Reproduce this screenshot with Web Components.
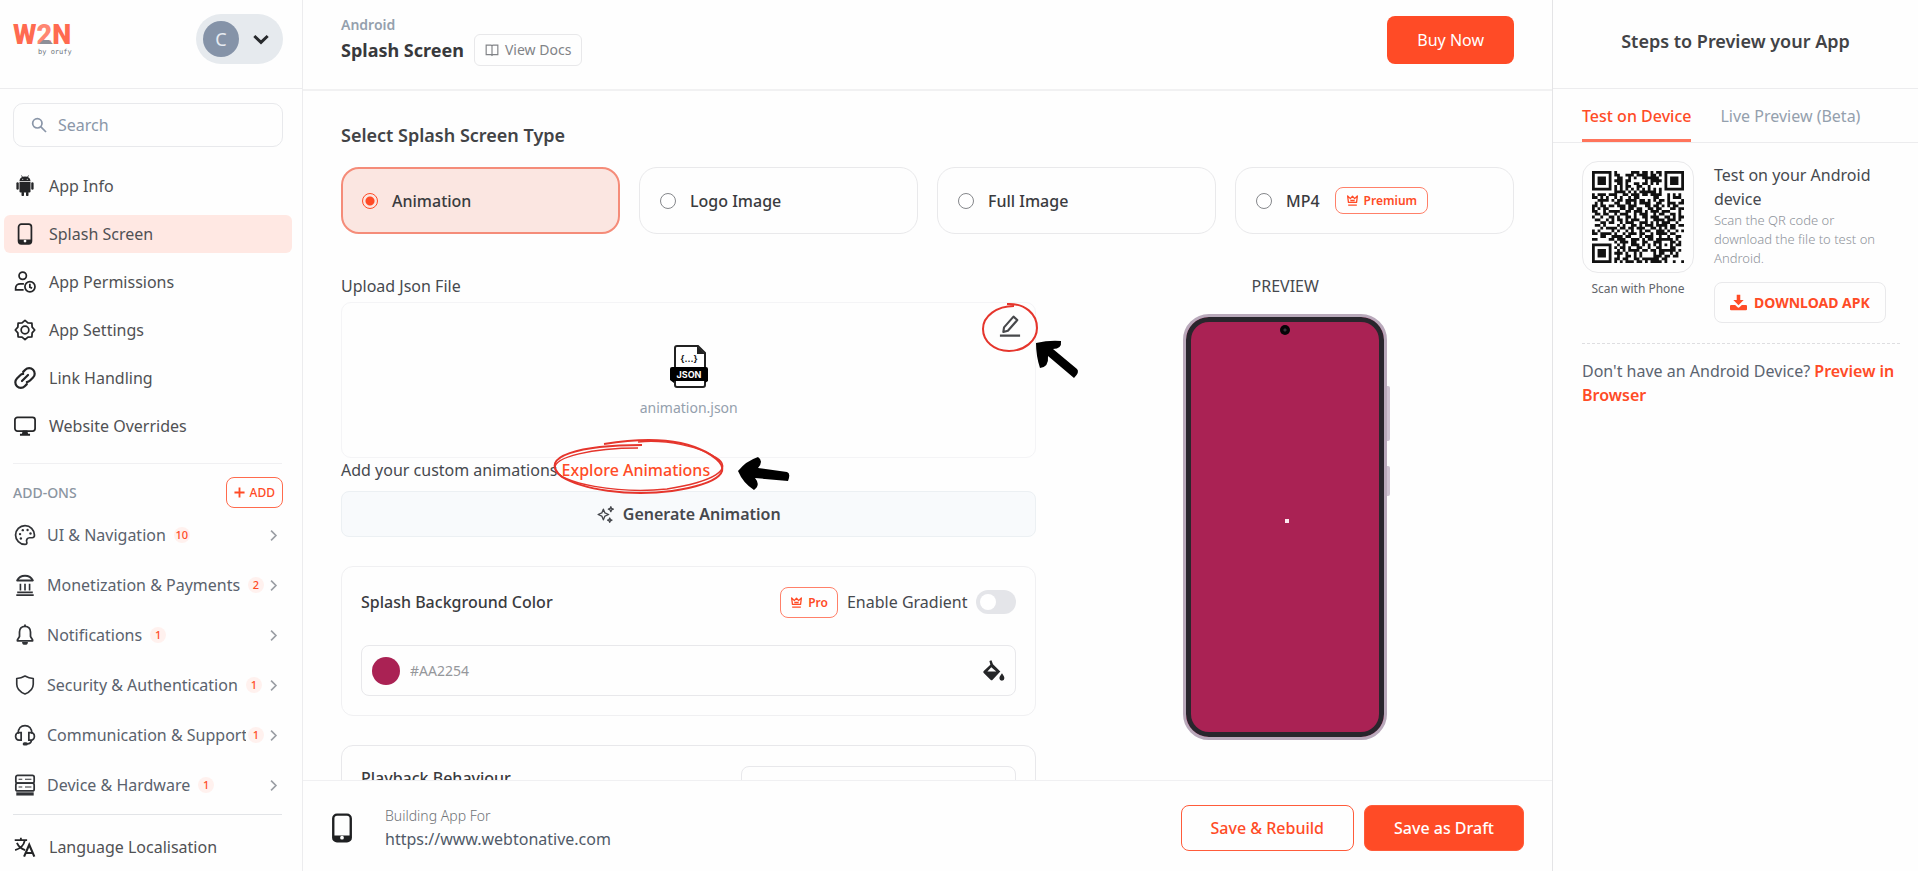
<!DOCTYPE html>
<html lang="en">
<head>
<meta charset="UTF-8">
<meta name="viewport" content="width=device-width, initial-scale=1.0">
<title>Splash Screen</title>
<style>
    body {
        margin: 0;
        font-family: "Noto Sans", "Open Sans", sans-serif;
        font-size: 16px;
        line-height: 24px;
        color: #46494e;
        background: #fefefe;
        --accent: #ff4b26;
        --line: #ececee;
        --muted: #94a0ad;
    }
</style>
</head>
<body>
<app-layout>
    <app-sidebar slot="left">
        <nav-item icon="android">App Info</nav-item>
        <nav-item icon="phone" active>Splash Screen</nav-item>
        <nav-item icon="permissions">App Permissions</nav-item>
        <nav-item icon="settings">App Settings</nav-item>
        <nav-item icon="link">Link Handling</nav-item>
        <nav-item icon="monitor">Website Overrides</nav-item>

        <addon-item slot="addons" icon="palette" count="10">UI &amp; Navigation</addon-item>
        <addon-item slot="addons" icon="bank" count="2">Monetization &amp; Payments</addon-item>
        <addon-item slot="addons" icon="bell" count="1">Notifications</addon-item>
        <addon-item slot="addons" icon="shield" count="1">Security &amp; Authentication</addon-item>
        <addon-item slot="addons" icon="headset" count="1">Communication &amp; Support</addon-item>
        <addon-item slot="addons" icon="server" count="1">Device &amp; Hardware</addon-item>

        <nav-item slot="bottom" icon="language">Language Localisation</nav-item>
    </app-sidebar>

    <page-header slot="header" section="Android" heading="Splash Screen"></page-header>

    <splash-editor slot="content">
        <type-card slot="types" value="animation" checked>Animation</type-card>
        <type-card slot="types" value="logo">Logo Image</type-card>
        <type-card slot="types" value="full">Full Image</type-card>
        <type-card slot="types" value="mp4">MP4<plan-badge slot="badge">Premium</plan-badge></type-card>

        <json-upload slot="form"></json-upload>
        <color-card slot="form"></color-card>
        <playback-card slot="form"></playback-card>

        <phone-preview slot="preview"></phone-preview>
    </splash-editor>

    <save-bar slot="footer" url="https://www.webtonative.com"></save-bar>

    <preview-steps slot="right"></preview-steps>
</app-layout>

<script>
const icons = {
    android: '<g fill="currentColor"><path d="M6 7.500h12v10.200a1.300 1.300 0 0 1-1.300 1.300H7.300A1.300 1.300 0 0 1 6 17.700z"/><path d="M6 6.700C6.100 4.600 7.200 3.100 8.800 2.300L7.700.8l.6-.4 1.200 1.600a7 7 0 0 1 5 0L15.700.4l.6.4-1.100 1.500c1.600.8 2.700 2.300 2.800 4.400z"/><rect x="2.600" y="8" width="2.600" height="8" rx="1.300"/><rect x="18.800" y="8" width="2.600" height="8" rx="1.300"/><rect x="8.200" y="18" width="2.700" height="5" rx="1.300"/><rect x="13.100" y="18" width="2.700" height="5" rx="1.300"/></g><g fill="#fff"><circle cx="9.500" cy="4.600" r=".6"/><circle cx="14.500" cy="4.600" r=".6"/></g>',
    phone: '<rect x="5" y="1.300" width="14" height="21.400" rx="3" fill="none" stroke="currentColor" stroke-width="1.900"/><path d="M5 18h14v2a2.700 2.700 0 0 1-2.700 2.700H7.700A2.700 2.700 0 0 1 5 20z" fill="currentColor"/><circle cx="12" cy="19.700" r="1.500" fill="#fff"/>',
    permissions: '<g fill="none" stroke="currentColor" stroke-width="1.900"><circle cx="9.500" cy="5.200" r="4"/><path d="M10.500 20.500H1.800v-1.900c0-3 2.400-4.600 5-4.600h4"/><circle cx="17.400" cy="17.200" r="5.500"/><path d="M17.300 14v3.600l2.400 1.300"/></g>',
    settings: '<g fill="none" stroke="currentColor" stroke-width="1.900" stroke-linejoin="round"><circle cx="12" cy="12" r="4.200"/><path d="M12 1.400l3.200 2.800 4.300.3.300 4.300 2.800 3.200-2.800 3.200-.3 4.300-4.300.3-3.200 2.800-3.200-2.800-4.300-.3-.3-4.300L1.400 12l2.800-3.200.3-4.300 4.300-.3z"/></g>',
    link: '<g fill="none" stroke="currentColor" stroke-width="2.400" stroke-linecap="round"><path d="M10 5.300l2.300-2.300a6 6 0 0 1 8.500 8.500l-3.300 3.300a5.500 5.500 0 0 1-3.500 1.600"/><path d="M14 18.700l-2.300 2.300a6 6 0 0 1-8.500-8.500l3.300-3.300A5.500 5.500 0 0 1 10 7.600"/><path d="M8.700 15.300l6.600-6.600"/></g>',
    monitor: '<rect x="1" y="2.500" width="22" height="15" rx="2.800" fill="none" stroke="currentColor" stroke-width="1.900"/><path d="M9.500 17h5l.8 3.500h2.200v2h-11v-2h2.200z" fill="currentColor"/>',
    palette: '<path d="M12 1.700a10.300 10.300 0 0 0 0 20.600c1.700 0 2.400-1.300 1.900-2.700-.8-2.600.6-4.700 3.300-4.600h2.600c1.700 0 2.600-1.200 2.500-3C22.100 6.200 17.700 1.700 12 1.700z" fill="none" stroke="currentColor" stroke-width="1.900"/><g fill="currentColor"><circle cx="6.600" cy="11" r="1.300"/><circle cx="9.600" cy="6.700" r="1.300"/><circle cx="14.800" cy="6.500" r="1.300"/><circle cx="18" cy="10.300" r="1.300"/><circle cx="7.500" cy="15.800" r="1.300"/></g>',
    bank: '<path d="M3.500 7C5 4 8.200 2 12 2s7 2 8.500 5z" fill="none" stroke="currentColor" stroke-width="2.200" stroke-linejoin="round"/><g stroke="currentColor" stroke-width="1.800"><path d="M7 10.500v7.500M12 10.500v7.500M17 10.500v7.500M3.500 20h17M2.500 23h19"/></g>',
    bell: '<path d="M12 2.500c-3.700 0-6 2.700-6 6.200v5L3.700 17.500v.9h16.600v-.9L18 13.700v-5c0-3.500-2.300-6.200-6-6.200z" fill="none" stroke="currentColor" stroke-width="1.900" stroke-linejoin="round"/><path d="M12 .6v2" stroke="currentColor" stroke-width="2"/><path d="M8.800 19.500h6.400a3.200 3.200 0 0 1-6.400 0z" fill="currentColor"/>',
    shield: '<path d="M12 2.200c2.800 1.600 5.600 2.500 9 2.700v6.200c0 5-3.300 8.300-9 10.700-5.700-2.400-9-5.700-9-10.700V4.900c3.400-.2 6.200-1.100 9-2.700z" fill="none" stroke="currentColor" stroke-width="1.800" stroke-linejoin="round"/>',
    headset: '<g fill="none" stroke="currentColor" stroke-width="1.900"><path d="M4.500 10.500C4.500 5 7.700 1.700 12 1.700S19.500 5 19.500 10.500"/><path d="M7.800 9.500v8H5.300A3.500 3.500 0 0 1 1.800 14v-1a3.500 3.500 0 0 1 3.500-3.500zM16.200 9.500v8h2.500a3.500 3.500 0 0 0 3.500-3.500v-1a3.500 3.500 0 0 0-3.500-3.500z"/><path d="M19 17.500c0 2.700-2 4.200-5 4.200"/></g><rect x="9.500" y="20" width="5.500" height="3.500" rx="1.700" fill="currentColor"/>',
    server: '<g fill="none" stroke="currentColor" stroke-width="1.900"><rect x="2" y="1.500" width="20" height="8.500" rx="2"/><rect x="2" y="10" width="20" height="8.500" rx="2"/></g><path d="M5 5.700h4M12 5.700h7M5 14.200h4M12 14.200h7" stroke="currentColor" stroke-width="1.200"/><path d="M2.500 20h19v3.500h-19z" fill="currentColor"/>',
    language: '<g fill="none" stroke="currentColor" stroke-width="2"><path d="M.8 4.500h13.500M7.500 2v2.500M3.200 7.500c1.500 3.600 4.700 6.500 9 7.800M11.700 5c-1 4.800-4.700 8.700-10.500 10.300"/><path d="M11 22.500l5.600-13 5.600 13M13 18.500h7.200" stroke-width="2.300"/></g>',
    search: '<g fill="none" stroke="currentColor" stroke-width="2.600"><circle cx="9.500" cy="9.500" r="7"/><path d="M14.500 14.500l8 8"/></g>',
    down: '<path d="M2 7.500l10 9.500 10-9.500" fill="none" stroke="currentColor" stroke-width="4.500"/>',
    right: '<path d="M7.500 3l9 9-9 9" fill="none" stroke="currentColor" stroke-width="3"/>',
    plus: '<path d="M12 1v22M1 12h22" fill="none" stroke="currentColor" stroke-width="4"/>',
    book: '<path d="M2 3.500h8.500L12 5l1.500-1.500H22v16.500h-8.500L12 21.500 10.500 20H2zM12 5v16" fill="none" stroke="currentColor" stroke-width="2"/>',
    crown: '<path d="M3 3.500l5 5L12 4l4 4.500 5-5-1.500 12h-15zM4 20.500h16M8 12h8" fill="none" stroke="currentColor" stroke-width="2.400" stroke-linejoin="round"/>',
    pencil: '<path d="M5.500 13.500L15.800 1.800l4.200 3.700L9.700 17.200l-5 1.300zM1 22.500h22" fill="none" stroke="currentColor" stroke-width="2.300" stroke-linejoin="round"/>',
    sparkles: '<g fill="none" stroke="currentColor" stroke-width="1.900" stroke-linejoin="round"><path d="M9 4.500l2.200 5.300L16.500 12l-5.300 2.200L9 19.500l-2.200-5.300L1.500 12l5.300-2.200z"/><path d="M19.500 1l1 2.500L23 4.500l-2.500 1-1 2.500-1-2.500-2.500-1 2.500-1zM18 17l.9 2.100 2.100.9-2.100.9L18 23l-.9-2.100L15 20l2.100-.9z"/></g>',
    bucket: '<path d="M7 1l2.200-.6 1.700 4.200 8 8-8.400 8.900a1.600 1.600 0 0 1-2.300 0L.8 14.300a1.600 1.600 0 0 1 0-2.300L8 5.200zM9 8l-4.200 4.500h9.700z" fill="currentColor" fill-rule="evenodd"/><path d="M20.700 14.500c1.600 2.300 2.600 3.900 2.600 5.300a2.700 2.700 0 0 1-5.400 0c0-1.400 1.200-3 2.800-5.300z" fill="currentColor"/>',
    download: '<path d="M9.500 1h5v7.500h4.800L12 16 4.700 8.500h4.800z" fill="currentColor"/><path d="M1.500 15.500h5.800l3 3a2.400 2.400 0 0 0 3.400 0l3-3h5.800A1.500 1.500 0 0 1 24 17v4.500a1.500 1.500 0 0 1-1.500 1.500h-21A1.500 1.500 0 0 1 0 21.500V17a1.500 1.500 0 0 1 1.500-1.500z" fill="currentColor"/>'
};

const resetStyles = `
    :host, *, *::before, *::after { box-sizing: border-box; }
    button, input, select { font: inherit; color: inherit; margin: 0; }
    button { cursor: pointer; }
    a { color: inherit; text-decoration: none; }
    h1, h2, h3, p { margin: 0; }
`;

// Registers an element whose shadow root is cloned from its template.
// setup runs once, when the element's attributes can be read.
function define(name, html, setup) {
    const template = document.createElement('template');
    template.innerHTML = `<style>${resetStyles}</style>` + html;

    customElements.define(name, class extends HTMLElement {
        constructor() {
            super();
            this.attachShadow({mode: 'open'});
            this.shadowRoot.appendChild(template.content.cloneNode(true));
        }

        connectedCallback() {
            if (setup && !this.ready) {
                this.ready = true;
                setup(this, this.shadowRoot);
            }
        }
    });
}

define('plan-badge', `
    <style>
        :host {
            display: inline-flex;
            align-items: center;
            gap: 5px;
            padding: 3px 10px;
            border: 1px solid #ff8069;
            border-radius: 8px;
            font-size: 12px;
            line-height: 19px;
            font-weight: 600;
            color: var(--accent);
        }
        app-icon { width: 13px; height: 13px; }
    </style>
    <app-icon name="crown"></app-icon><slot></slot>
`);

define('app-layout', `
    <style>
        :host {
            display: grid;
            grid-template-columns: 303px minmax(0, 1fr) 366px;
            height: 100vh;
            overflow: hidden;
        }
        .left { border-right: 1px solid var(--line); overflow: hidden; }
        .right { border-left: 1px solid #e4e4e6; overflow: hidden; }
        main { display: flex; flex-direction: column; min-height: 0; }
        .content { flex: 1; min-height: 0; overflow: hidden; }
    </style>
    <div class="left"><slot name="left"></slot></div>
    <main>
        <slot name="header"></slot>
        <div class="content"><slot name="content"></slot></div>
        <slot name="footer"></slot>
    </main>
    <div class="right"><slot name="right"></slot></div>
`);

define('brand-logo', `
    <style>
        :host { display: block; }
        svg { display: block; overflow: visible; }
        .mark { font: 900 27px Roboto, sans-serif; }
        .by { font: 7px "DejaVu Sans Mono", monospace; }
    </style>
    <svg width="58" height="34" viewBox="0 0 58 34">
        <text class="mark" x="0" y="20" fill="#ff6a50">W<tspan fill="#ff8672">2</tspan>N</text>
        <path d="M26 20l4-4h6l4 4z" fill="#8d8f98"/>
        <text class="by" x="25" y="30" fill="#6d747c">by orufy</text>
    </svg>
`);

define('app-sidebar', `
    <style>
        :host { display: block; }
        header {
            display: flex;
            justify-content: space-between;
            align-items: flex-start;
            height: 89px;
            padding: 14px 19px 0 13px;
            border-bottom: 1px solid var(--line);
        }
        brand-logo { margin-top: 10px; }
        .account {
            display: flex;
            align-items: center;
            gap: 14px;
            height: 50px;
            padding: 0 14px 0 7px;
            border: 0;
            border-radius: 25px;
            background: #e6eaee;
            color: #27292c;
        }
        .account span {
            width: 36px;
            height: 36px;
            border-radius: 50%;
            background: #8593a8;
            color: #e6ebf2;
            font-size: 18px;
            line-height: 36px;
        }
        .account app-icon { width: 16px; height: 16px; }
        .search {
            display: flex;
            align-items: center;
            gap: 11px;
            height: 44px;
            margin: 14px 19px 0 13px;
            padding: 0 17px;
            border: 1px solid #e8e9ec;
            border-radius: 10px;
            color: #8a96a8;
        }
        .search app-icon { width: 16px; height: 16px; }
        input { flex: 1; min-width: 0; padding: 0; border: 0; outline: 0; background: none; }
        input::placeholder { color: inherit; opacity: 1; }
        nav { display: grid; gap: 10px; margin: 20px 10px 0 4px; }
        hr { margin: 4px 20px 0 13px; border: 0; border-top: 1px solid #e2e4e7; }
        .top { margin-top: 18px; border-color: #f0f0f2; }
        .addons-head {
            display: flex;
            justify-content: space-between;
            align-items: center;
            margin: 13px 19px 2px 13px;
            color: #8b95a1;
            font-size: 14px;
            font-weight: 500;
        }
        h2 { font: inherit; }
        .add {
            display: flex;
            align-items: center;
            gap: 5px;
            height: 31px;
            padding: 0 7px;
            border: 1px solid #ff6b4d;
            border-radius: 8px;
            background: none;
            color: var(--accent);
            font-size: 12px;
            font-weight: 500;
        }
        .add app-icon { width: 11px; height: 11px; }
        .bottom { margin-top: 13px; }
    </style>
    <header>
        <brand-logo></brand-logo>
        <button class="account" type="button" aria-label="Account C"><span>C</span><app-icon name="down"></app-icon></button>
    </header>
    <label class="search"><app-icon name="search"></app-icon><input type="text" placeholder="Search" aria-label="Search"></label>
    <nav><slot></slot></nav>
    <hr class="top">
    <div class="addons-head">
        <h2>ADD-ONS</h2>
        <button class="add" type="button"><app-icon name="plus"></app-icon>ADD</button>
    </div>
    <slot name="addons"></slot>
    <hr>
    <nav class="bottom"><slot name="bottom"></slot></nav>
`);

define('nav-item', `
    <style>
        :host { display: block; color: #505154; }
        a {
            display: flex;
            align-items: center;
            gap: 13px;
            height: 38px;
            padding-left: 10px;
            border-radius: 6px;
        }
        :host([active]) a { background: #ffe8e3; }
        app-icon { color: #242527; }
    </style>
    <a href="#"><app-icon></app-icon><span><slot></slot></span></a>
`, (host, root) => {
    root.querySelector('app-icon').setAttribute('name', host.getAttribute('icon'));
});

define('addon-item', `
    <style>
        :host { display: block; color: #5a626d; }
        a {
            display: flex;
            align-items: center;
            height: 50px;
            padding: 0 22px 0 14px;
        }
        /* the label may run into its own padding before it is clipped */
        .label { min-width: 0; margin-left: 11px; padding-right: 6px; overflow: hidden; white-space: nowrap; }
        .count {
            flex: none;
            min-width: 16px;
            margin: 0 3px 0 2px;
            border-radius: 8px;
            background: #fff1ee;
            color: var(--accent);
            font-size: 11px;
            line-height: 16px;
            font-weight: 500;
            text-align: center;
        }
        .icon { color: #303236; }
        .chevron { width: 13px; height: 13px; margin-left: auto; color: #9a9ea4; }
    </style>
    <a href="#">
        <app-icon class="icon"></app-icon>
        <span class="label"><slot></slot></span>
        <span class="count"></span>
        <app-icon class="chevron" name="right"></app-icon>
    </a>
`, (host, root) => {
    root.querySelector('.icon').setAttribute('name', host.getAttribute('icon'));
    root.querySelector('.count').textContent = host.getAttribute('count');
});

define('page-header', `
    <style>
        :host {
            display: flex;
            justify-content: space-between;
            align-items: flex-start;
            height: 91px;
            padding: 16px 38px 0;
            border-bottom: 2px solid #f1f1f2;
        }
        .section { font-size: 14px; line-height: 18px; font-weight: 600; color: var(--muted); }
        .title { display: flex; align-items: center; gap: 10px; }
        h1 { font-size: 18px; line-height: 32px; font-weight: 700; color: #38393c; }
        .docs {
            display: flex;
            align-items: center;
            gap: 6px;
            height: 32px;
            padding: 0 10px;
            border: 1px solid #e8e8ea;
            border-radius: 6px;
            color: #818387;
            font-size: 14px;
        }
        .docs app-icon { width: 14px; height: 14px; }
        button {
            height: 48px;
            padding: 0 30px;
            border: 0;
            border-radius: 8px;
            background: var(--accent);
            color: #fff;
        }
    </style>
    <div>
        <div class="section"></div>
        <div class="title">
            <h1></h1>
            <a class="docs" href="#"><app-icon name="book"></app-icon>View Docs</a>
        </div>
    </div>
    <button type="button">Buy Now</button>
`, (host, root) => {
    root.querySelector('.section').textContent = host.getAttribute('section');
    root.querySelector('h1').textContent = host.getAttribute('heading');
});

define('splash-editor', `
    <style>
        :host { display: block; padding: 31px 38px 0; }
        h2 { font-size: 18px; line-height: 26px; font-weight: 600; color: #424346; }
        .types {
            display: grid;
            grid-template-columns: repeat(4, minmax(0, 1fr));
            gap: 19px;
            margin-top: 19px;
        }
        .columns {
            display: grid;
            grid-template-columns: minmax(0, 152fr) minmax(0, 100fr);
            gap: 20px;
            margin-top: 40px;
        }
    </style>
    <h2>Select Splash Screen Type</h2>
    <div class="types"><slot name="types"></slot></div>
    <div class="columns">
        <div><slot name="form"></slot></div>
        <div><slot name="preview"></slot></div>
    </div>
`);

define('type-card', `
    <style>
        :host { display: block; }
        label {
            display: flex;
            align-items: center;
            height: 67px;
            padding: 0 20px;
            border: 1px solid #e9e9eb;
            border-radius: 18px;
            font-weight: 500;
            color: #3a3b3e;
        }
        :host([checked]) label { background: #fbe6e1; border: 2px solid #f58c79; padding: 0 19px; }
        input {
            appearance: none;
            width: 16px;
            height: 16px;
            margin-right: 14px;
            border: 1px solid #85878b;
            border-radius: 50%;
            background: #fff;
        }
        input:checked {
            border-color: var(--accent);
            background: radial-gradient(circle, var(--accent) 4px, #fbe6e1 5px);
        }
        ::slotted(plan-badge) { margin-left: 15px; }
    </style>
    <label><input type="radio" name="splash-type"><span><slot></slot></span><slot name="badge"></slot></label>
`, (host, root) => {
    const input = root.querySelector('input');
    input.value = host.getAttribute('value');
    input.checked = host.hasAttribute('checked');
});

define('json-upload', `
    <style>
        :host { display: block; }
        h3 { font-size: 16px; font-weight: 400; line-height: 24px; }
        .drop {
            position: relative;
            display: flex;
            flex-direction: column;
            align-items: center;
            gap: 8px;
            height: 156px;
            margin-top: 4px;
            padding-top: 42px;
            border: 1px solid #f4f4f6;
            border-radius: 10px;
            font-size: 14px;
            color: var(--muted);
        }
        .json { font: 700 9px Inter, sans-serif; }
        .edit {
            position: absolute;
            top: 12px;
            right: 14px;
            padding: 0;
            border: 0;
            background: none;
            line-height: 0;
            color: #47484b;
        }
        .ring, .arrow { position: absolute; overflow: visible; pointer-events: none; }
        .edit .ring { top: -12px; left: -17px; }
        .edit .arrow { top: 26px; left: 37px; }
        .hint { line-height: 24px; }
        .explore { position: relative; color: var(--accent); font-weight: 500; }
        .explore .ring { top: -21px; left: -10px; }
        .explore .arrow { top: -2px; left: 100%; margin-left: 28px; }
        .generate {
            display: flex;
            justify-content: center;
            align-items: center;
            gap: 9px;
            width: 100%;
            height: 46px;
            margin-top: 9px;
            border: 1px solid #ecf0f3;
            border-radius: 8px;
            background: #f8fafc;
            font-weight: 600;
            color: #46484d;
        }
        .generate app-icon { width: 17px; height: 17px; }
    </style>
    <h3>Upload Json File</h3>
    <div class="drop">
        <svg width="38" height="43" viewBox="0 0 38 43" aria-hidden="true">
            <path d="M5 22V3a2 2 0 0 1 2-2h21l7 7v14" fill="#fff" stroke="#222" stroke-width="2"/>
            <path d="M27 1v8h8z" fill="#222"/>
            <rect x="5" y="34" width="30" height="8" rx="2" fill="#fff" stroke="#222" stroke-width="2"/>
            <path d="M0 24a2 2 0 0 1 2-2h34a2 2 0 0 1 2 2v12l-3 2v-2H4v2l-4-3z" fill="#000"/>
            <text class="json" x="19" y="17" text-anchor="middle" fill="#222">{...}</text>
            <text class="json" x="19" y="33" text-anchor="middle" fill="#fff">JSON</text>
        </svg>
        <span>animation.json</span>
        <button class="edit" type="button" aria-label="Edit file">
            <app-icon name="pencil"></app-icon>
            <svg class="ring" width="56" height="49" viewBox="0 0 56 49">
                <path d="M25 1c18-1 30 10 30 24C55 38 42 48 27 48 12 48 1 38 1 26 1 13 15 3 32 3" fill="none" stroke="#e5352c" stroke-width="2"/>
            </svg>
            <svg class="arrow" width="43" height="37" viewBox="0 0 43 37">
                <path d="M0 2Q13-1 25 0Q26 8 17 8L41 28Q44 31 38 37L12 15Q13 26 4 27Q0 15 0 2z" fill="#000"/>
            </svg>
        </button>
    </div>
    <p class="hint">Add your custom animations
        <a class="explore" href="#">Explore Animations<svg class="ring" width="175" height="56" viewBox="0 0 175 56">
            <g fill="none" stroke="#e5352c" stroke-width="2">
                <path d="M52 6C100-2 132 2 154 14C188 33 165 46 120 53C75 59 30 51 10 39C-16 18 30 7 90 7"/>
                <path d="M86 10C40 10 2 19 3 30C4 46 70 56 115 51C160 44 184 31 163 19C148 9 115 1 86 4" stroke-width="1.500"/>
            </g>
        </svg><svg class="arrow" width="52" height="34" viewBox="0 0 52 34">
            <path d="M0 14Q8 4 20 0Q26 4 20 11L49 15Q53 16 50 24L17 21Q23 28 16 33Q5 26 0 14z" fill="#000"/>
        </svg></a>
    </p>
    <button class="generate" type="button"><app-icon name="sparkles"></app-icon>Generate Animation</button>
`);

define('color-card', `
    <style>
        :host {
            display: block;
            height: 150px;
            margin-top: 29px;
            padding: 19px 19px 0;
            border: 1px solid #f0f0f2;
            border-radius: 12px;
        }
        .head { display: flex; align-items: center; gap: 9px; height: 32px; }
        h3 { flex: 1; font-size: 16px; line-height: 24px; font-weight: 500; color: #3a3b3e; }
        plan-badge { padding: 5px 9px; }
        .gradient { display: flex; align-items: center; gap: 9px; }
        .gradient input {
            appearance: none;
            width: 40px;
            height: 24px;
            padding: 4px;
            border-radius: 12px;
            background: #e4e5e9;
        }
        .gradient input::before {
            content: "";
            display: block;
            width: 16px;
            height: 16px;
            border-radius: 50%;
            background: #fff;
        }
        .field {
            display: flex;
            align-items: center;
            gap: 10px;
            height: 51px;
            margin-top: 27px;
            padding: 0 10px;
            border: 1px solid #e8e8eb;
            border-radius: 8px;
        }
        .swatch { width: 28px; height: 28px; border-radius: 50%; background: #aa2254; }
        .field input {
            flex: 1;
            min-width: 0;
            padding: 0;
            border: 0;
            outline: 0;
            background: none;
            font-size: 14px;
            color: #95979b;
        }
        button { padding: 0; border: 0; background: none; line-height: 0; color: #252628; }
    </style>
    <div class="head">
        <h3 id="title">Splash Background Color</h3>
        <plan-badge>Pro</plan-badge>
        <label class="gradient">Enable Gradient<input type="checkbox"></label>
    </div>
    <div class="field">
        <span class="swatch"></span>
        <input type="text" value="#AA2254" aria-labelledby="title">
        <button type="button" aria-label="Pick colour"><app-icon name="bucket"></app-icon></button>
    </div>
`);

define('playback-card', `
    <style>
        :host {
            display: block;
            margin-top: 29px;
            padding: 20px 19px;
            border: 1px solid #e8e8eb;
            border-radius: 12px;
        }
        label {
            display: flex;
            align-items: flex-start;
            justify-content: space-between;
            font-weight: 500;
            line-height: 24px;
            color: #3a3b3e;
        }
        select {
            appearance: none;
            width: 42%;
            height: 44px;
            border: 1px solid #e8e8eb;
            border-radius: 8px;
            background: none;
        }
    </style>
    <label>Playback Behaviour<select></select></label>
`);

define('phone-preview', `
    <style>
        :host { display: flex; flex-direction: column; align-items: center; gap: 16px; }
        .device {
            position: relative;
            width: 204px;
            height: 426px;
            border: 3px solid #b9a9bb;
            border-radius: 26px;
            background: #aa2254;
            box-shadow: inset 0 0 0 5px #29262d;
        }
        .camera, .dot, .key { position: absolute; }
        .camera {
            top: 8px;
            left: 50%;
            width: 10px;
            height: 10px;
            margin-left: -5px;
            border-radius: 50%;
            background: radial-gradient(circle, #39333c 1px, #060507 2px);
        }
        .dot { top: 50%; left: 50%; width: 4px; height: 4px; margin: -8px 0 0; background: #fbe9f0; }
        .key { left: 100%; width: 3px; margin-left: 3px; background: #cfc3d2; border-radius: 0 2px 2px 0; }
        .volume { top: 69px; height: 55px; }
        .power { top: 149px; height: 30px; }
    </style>
    <div>PREVIEW</div>
    <div class="device">
        <div class="camera"></div>
        <div class="dot"></div>
        <div class="key volume"></div>
        <div class="key power"></div>
    </div>
`);

define('save-bar', `
    <style>
        :host {
            display: flex;
            align-items: flex-start;
            height: 91px;
            padding: 24px 28px 0;
            border-top: 1px solid #f0f0f2;
            background: #fefefe;
        }
        .app-icon { width: 30px; height: 30px; margin: 8px 28px 0 -4px; color: #1f2022; }
        .target { flex: 1; }
        .caption { font-size: 14px; line-height: 22px; font-weight: 300; color: #6f7276; }
        .url { line-height: 24px; color: #505a68; }
        .actions { display: flex; gap: 10px; }
        button {
            height: 46px;
            padding: 0 29px;
            border: 1px solid #ff5b3a;
            border-radius: 8px;
            background: none;
            font-weight: 500;
            color: var(--accent);
        }
        .primary { background: var(--accent); color: #fff; }
    </style>
    <app-icon class="app-icon" name="phone"></app-icon>
    <div class="target">
        <div class="caption">Building App For</div>
        <div class="url"></div>
    </div>
    <div class="actions">
        <button type="button">Save &amp; Rebuild</button>
        <button class="primary" type="button">Save as Draft</button>
    </div>
`, (host, root) => {
    root.querySelector('.url').textContent = host.getAttribute('url');
});

const qrRows = [
    '#######.#.....###.##.#.##.#######',
    '#.....#.##..###.####.##.#.#.....#',
    '#.###.#..##..#.#..######..#.###.#',
    '#.###.#.###.##.....#.####.#.###.#',
    '#.###.#..##.#..##.##.#.#..#.###.#',
    '#.....#.#.#.##..##..#.....#.....#',
    '#######.#.#.#.#.#.#.#.#.#.#######',
    '........####.#.#.######.#........',
    '#.###.###..##.###.##.####..#.#.#.',
    '##.#.#..#.#..#.##.....##...#.###.',
    '..####.#.##.####.##.#.#.##.#....#',
    '.#.#....##..##.#.####..##..###.##',
    '##.##.##.###.###...##.##.#.#.##..',
    '#.#.##....##.##.##..##.##...##.##',
    '##..#.####..##.###.#.###.###...#.',
    '.##.##..#.###..#.###..#.##..##.#.',
    '#..#..##.#..##.#..##.###..##.#.##',
    '.##..#.#.##.#.###..#..####.###.#.',
    '...##.##..#.###..###.#.#.###..#..',
    '.##.#....#.#..##.#.###.####.##.##',
    '...#.####.##.##.###..##.#.#.##...',
    '#.#....#.#..#.#..#.##..###.#..#.#',
    '##.####.#..#.###.##..#.####.##...',
    '...##..####.##...#.###..#..#..##.',
    '##....##.###..###.#.##.######.#..',
    '........#.###.##..##..###...##.#.',
    '#######..#.#..###.#.#.#.#.#.#.##.',
    '#.....#.#.##.#..##..#..##...##...',
    '#.###.#..#.#.####.##.##.######.#.',
    '#.###.#.###.#..#.#....#.##..#.#..',
    '#.###.#..#..##.#.#....###.##.##..',
    '#.....#.##.##..##.######.##......',
    '#######.#.#.###.##.#.####.#..#..#'
];

define('qr-code', `
    <style>
        :host { display: block; }
        svg { display: block; width: 100%; }
    </style>
    <svg viewBox="0 0 33 33" role="img" aria-label="QR code"><path fill="#111"/></svg>
`, (host, root) => {
    let d = '';
    qrRows.forEach((row, y) => {
        [...row].forEach((cell, x) => {
            if (cell === '#') d += `M${x} ${y}h1v1h-1z`;
        });
    });
    root.querySelector('path').setAttribute('d', d);
});

define('preview-steps', `
    <style>
        :host { display: block; }
        h2 {
            height: 89px;
            padding-top: 29px;
            border-bottom: 1px solid var(--line);
            font-size: 18px;
            line-height: 24px;
            font-weight: 600;
            text-align: center;
            color: #424346;
        }
        .tabs {
            display: flex;
            gap: 29px;
            height: 54px;
            padding: 0 29px;
            border-bottom: 1px solid var(--line);
            color: var(--muted);
        }
        .tabs a { padding-top: 15px; }
        .tabs .active { border-bottom: 3px solid #ff745b; color: var(--accent); font-weight: 500; }
        .test { display: flex; gap: 20px; padding: 18px 32px 0 29px; }
        .scan { text-align: center; font-size: 12px; line-height: 20px; color: #62656a; }
        .frame {
            width: 112px;
            height: 112px;
            margin-bottom: 6px;
            padding: 9px;
            border: 1px solid #e9e9eb;
            border-radius: 16px;
        }
        .info { flex: 1; padding-top: 2px; }
        h3 { font-size: 16px; font-weight: 400; }
        .small { font-size: 13px; line-height: 19px; font-weight: 300; color: #8e939b; }
        .download {
            display: inline-flex;
            align-items: center;
            gap: 7px;
            height: 41px;
            margin-top: 14px;
            padding: 0 15px;
            border: 1px solid #e9e9eb;
            border-radius: 8px;
            background: none;
            color: var(--accent);
            font-size: 14px;
            font-weight: 700;
            white-space: nowrap;
        }
        .download app-icon { width: 17px; height: 17px; }
        .browser {
            margin: 20px 18px 0 29px;
            padding-top: 15px;
            border-top: 1px dashed #dedee1;
            color: #5b6470;
        }
        .browser a { color: var(--accent); font-weight: 600; }
    </style>
    <h2>Steps to Preview your App</h2>
    <nav class="tabs">
        <a class="active" href="#">Test on Device</a>
        <a href="#">Live Preview (Beta)</a>
    </nav>
    <div class="test">
        <div class="scan">
            <div class="frame"><qr-code></qr-code></div>
            Scan with Phone
        </div>
        <div class="info">
            <h3>Test on your Android device</h3>
            <p class="small">Scan the QR code or download the file to test on Android.</p>
            <button class="download" type="button"><app-icon name="download"></app-icon>DOWNLOAD APK</button>
        </div>
    </div>
    <p class="browser">Don't have an Android Device? <a href="#">Preview in Browser</a></p>
`);

// Comes last: the elements above set the name of their icon first.
define('app-icon', `
    <style>
        :host { display: inline-block; width: 22px; height: 22px; flex: none; }
        svg { display: block; width: 100%; height: 100%; overflow: visible; }
    </style>
    <svg viewBox="0 0 24 24" aria-hidden="true"></svg>
`, (host, root) => {
    root.querySelector('svg').innerHTML = icons[host.getAttribute('name')];
});
</script>
</body>
</html>
